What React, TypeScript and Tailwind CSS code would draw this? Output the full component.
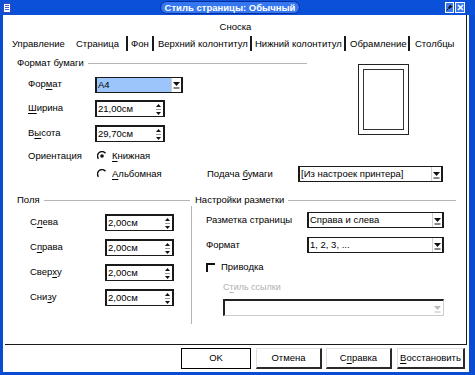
import React from 'react';

// Small helpers for the old-school dialog controls

const U = ({ children }: { children: React.ReactNode }) => <span className="underline underline-offset-2">{children}</span>;

const DownArrow = ({ dim }: { dim?: boolean }) => (
  <svg width="9" height="9" viewBox="0 0 9 9">
    <path d="M1 2h7L4.5 6z" fill={dim ? '#bbb' : '#111'} />
    <path d="M1.5 8h6" stroke={dim ? '#bbb' : '#111'} strokeWidth="1" />
  </svg>
);

const SpinArrows = () => (
  <svg width="7" height="13" viewBox="0 0 7 13">
    <path d="M3.5 1L6 4H1z" fill="#111" />
    <path d="M1 6.5h5" stroke="#999" strokeWidth="1" />
    <path d="M1 9h5L3.5 12z" fill="#111" />
  </svg>
);

interface FieldProps {
  value: string;
  width: string;
}

const Spin: React.FC<FieldProps> = ({ value, width }) => (
  <div className={`${width} h-[17px] flex items-center border border-[#1a1a1a] border-l-2 border-t-2 bg-white`}>
    <span className="flex-1 pl-[1px] text-[9.5px] text-black leading-none">{value}</span>
    <div className="w-[10px] h-full flex items-center justify-center border-r border-[#1a1a1a]">
      <SpinArrows />
    </div>
  </div>
);

const Select: React.FC<FieldProps & { highlight?: boolean }> = ({ value, width, highlight }) => (
  <div className={`${width} h-[16px] flex border border-[#1a1a1a] border-l-2 bg-white`}>
    <span className={`flex-1 flex items-center pl-[1px] text-[9.5px] leading-none text-black ${highlight ? 'bg-[#9cc6fb]' : ''}`}>{value}</span>
    <div className="w-[11px] h-full flex items-center justify-center border-l border-[#d0d0d0] border-r border-r-[#1a1a1a]">
      <DownArrow />
    </div>
  </div>
);

const Radio = ({ checked }: { checked?: boolean }) => (
  <svg width="10" height="10" viewBox="0 0 10 10" className="shrink-0">
    <path d="M8.5 2.2A4.2 4.2 0 0 0 1.5 7.8" fill="none" stroke="#111" strokeWidth="1.4" />
    {checked && <circle cx="5" cy="5" r="1.8" fill="#111" />}
  </svg>
);

const Header = ({ text, pl }: { text: string; pl: string }) => (
  <div className={`h-[12px] flex items-center ${pl}`}>
    <span className="text-[9.5px] leading-none text-black whitespace-nowrap">{text}</span>
    <div className="flex-1 h-px bg-[#b5b5b5] ml-[4px]" />
  </div>
);

const Btn = ({ children, width, primary }: { children: React.ReactNode; width: string; primary?: boolean }) => (
  <div
    className={`${width} h-[21px] flex items-center justify-center text-[9.5px] text-black bg-white ${
      primary ? 'border border-black' : 'border-r-2 border-b-2 border-[#2a2a2a] border-l border-t border-l-[#e0e0e0] border-t-[#e0e0e0]'
    }`}
  >
    {children}
  </div>
);

const Sep = () => <div className="w-[2px] h-[15px] bg-[#1a1a1a] shrink-0" />;

const Tab = ({ text, width, ml }: { text: string; width: string; ml: string }) => (
  <div className={`${width} ${ml} shrink-0 text-[9.5px] leading-none text-black whitespace-nowrap`}>{text}</div>
);

export default function App() {
  return (
    <div className="w-[475px] h-[375px] flex flex-col bg-[#0a4bd3] font-['Liberation_Sans',Arial,sans-serif] text-[9.5px] overflow-hidden">
      {/* Title bar */}
      <div className="h-[15px] flex items-center bg-[#0b50d8]">
        <div className="ml-[3px] w-[8px] h-[10px] bg-white border border-[#3a4ab0] flex flex-col gap-[1px] p-[1px]">
          <div className="h-px bg-[#4060d0]" />
          <div className="h-px bg-[#4060d0]" />
          <div className="h-px bg-[#4060d0]" />
        </div>
        <div className="flex-1" />
        <div className="h-[13px] px-[4px] ml-[4px] rounded-full bg-[#3577f0] border border-[#082e9c] flex items-center justify-center text-white text-[9.5px] font-bold leading-none whitespace-nowrap">
          Стиль страницы: Обычный
        </div>
        <div className="flex-1" />
        <div className="w-[9px] h-[11px] mr-[1px] bg-[#3a78ee] border border-white flex items-center justify-center">
          <svg width="7" height="7" viewBox="0 0 7 7">
            <path d="M4 0.5L6.5 3 5 3.5 3.5 5 2 3.5 3.5 2z" fill="#111" />
            <path d="M2.5 4.5L0.5 6.5" stroke="#111" strokeWidth="1" />
          </svg>
        </div>
        <div className="w-[10px] h-[11px] mr-[10px] bg-[#3a78ee] border border-white flex items-center justify-center">
          <svg width="7" height="7" viewBox="0 0 7 7">
            <path d="M1 1l5 5M6 1L1 6" stroke="#fff" strokeWidth="1.6" />
          </svg>
        </div>
      </div>

      {/* Window body */}
      <div className="flex-1 flex flex-col ml-[3px] mr-[6px] mb-[3px] bg-white">
        <div className="h-[330px] mx-[2px] border-r border-b border-[#1a1a1a] flex flex-col">
          <div className="mt-[5px] h-[14px] flex items-center justify-center text-black">Сноска</div>

          {/* Tabs */}
          <div className="mt-[2px] h-[15px] flex items-center">
            <Tab text="Управление" width="w-[58px]" ml="ml-[7px]" />
            <Tab text="Страница" width="w-[50px]" ml="ml-[6px]" />
            <Sep />
            <Tab text="Фон" width="w-[21px]" ml="ml-[3px]" />
            <Sep />
            <Tab text="Верхний колонтитул" width="w-[92px]" ml="ml-[4px]" />
            <Sep />
            <Tab text="Нижний колонтитул" width="w-[89px]" ml="ml-[3px]" />
            <Sep />
            <Tab text="Обрамление" width="w-[58px]" ml="ml-[4px]" />
            <Sep />
            <Tab text="Столбцы" width="w-[44px]" ml="ml-[5px]" />
          </div>

          {/* Формат бумаги */}
          <div className="mt-[6px] flex">
            <div className="w-[302px] flex flex-col">
              <Header text="Формат бумаги" pl="pl-[12px]" />
              <div className="mt-[8px] h-[15px] flex items-center">
                <span className="w-[90px] pl-[23px]">Фор<U>м</U>ат</span>
                <Select value="A4" width="w-[88px]" highlight />
              </div>
              <div className="mt-[8px] h-[17px] flex items-center">
                <span className="w-[90px] pl-[23px]"><U>Ш</U>ирина</span>
                <Spin value="21,00см" width="w-[70px]" />
              </div>
              <div className="mt-[8px] h-[17px] flex items-center">
                <span className="w-[90px] pl-[23px]">В<U>ы</U>сота</span>
                <Spin value="29,70см" width="w-[70px]" />
              </div>
              <div className="mt-[7px] h-[14px] flex items-center">
                <span className="w-[92px] pl-[23px]">Ориентация</span>
                <Radio checked />
                <span className="ml-[5px]"><U>К</U>нижная</span>
              </div>
            </div>
            <div className="ml-[51px] mt-[7px] w-[51px] h-[71px] border border-[#222] p-[4px]">
              <div className="w-full h-full border border-[#333]" />
            </div>
          </div>
          <div className="mt-[3px] h-[16px] flex items-center">
            <div className="w-[202px] pl-[92px] flex items-center">
              <Radio />
              <span className="ml-[5px]"><U>А</U>льбомная</span>
            </div>
            <span className="w-[91px]">Подача <U>б</U>умаги</span>
            <Select value="[Из настроек принтера]" width="w-[145px]" />
          </div>

          {/* Поля / Настройки разметки */}
          <div className="mt-[12px] flex">
            <div className="w-[185px] flex flex-col">
              <Header text="Поля" pl="pl-[12px]" />
              {[
                ['С', 'л', 'ева'],
                ['С', 'п', 'рава'],
                ['Свер', 'х', 'у'],
                ['Сни', 'з', 'у'],
              ].map(([a, b, c]) => (
                <div key={a + b} className="mt-[8px] h-[17px] flex items-center">
                  <span className="w-[100px] pl-[25px]">
                    {a}
                    <U>{b}</U>
                    {c}
                  </span>
                  <Spin value="2,00см" width="w-[69px]" />
                </div>
              ))}
            </div>
            <div className="flex-1 flex flex-col">
              <div className="pr-[10px]">
                <Header text="Настройки разметки" pl="pl-[5px]" />
              </div>
              <div className="ml-[1px] border-l border-[#b5b5b5] pl-[14px] pb-[8px] flex flex-col">
                <div className="mt-[6px] h-[16px] flex items-center">
                  <span className="w-[101px]">Разметка страницы</span>
                  <Select value="Справа и слева" width="w-[137px]" />
                </div>
                <div className="mt-[9px] h-[16px] flex items-center">
                  <span className="w-[101px]">Формат</span>
                  <Select value="1, 2, 3, ..." width="w-[137px]" />
                </div>
                <div className="mt-[7px] h-[14px] flex items-center">
                  <div className="w-[9px] h-[9px] border-t-2 border-l-2 border-[#111]" />
                  <span className="ml-[6px]">Приводка</span>
                </div>
                <div className="mt-[7px] h-[14px] pl-[17px] flex items-center text-[9px] text-[#b0b0b0]">
                  С<U>т</U>иль ссылки
                </div>
                <div className="mt-[4px] ml-[17px] w-[221px] h-[17px] flex border border-[#222] border-l-2 border-t-2 border-r-[#ccc] border-b-[#ccc]">
                  <div className="flex-1" />
                  <div className="w-[11px] flex items-center justify-center">
                    <DownArrow dim />
                  </div>
                </div>
              </div>
            </div>
          </div>
        </div>

        {/* Buttons */}
        <div className="mt-[3px] flex justify-end pr-[4px]">
          <Btn width="w-[70px]" primary>OK</Btn>
          <div className="w-[5px]" />
          <Btn width="w-[66px]">Отмена</Btn>
          <div className="w-[4px]" />
          <Btn width="w-[66px]">
            <span>С<U>п</U>равка</span>
          </Btn>
          <div className="w-[5px]" />
          <Btn width="w-[68px]">
            <span><U>В</U>осстановить</span>
          </Btn>
        </div>
      </div>
    </div>
  );
}
